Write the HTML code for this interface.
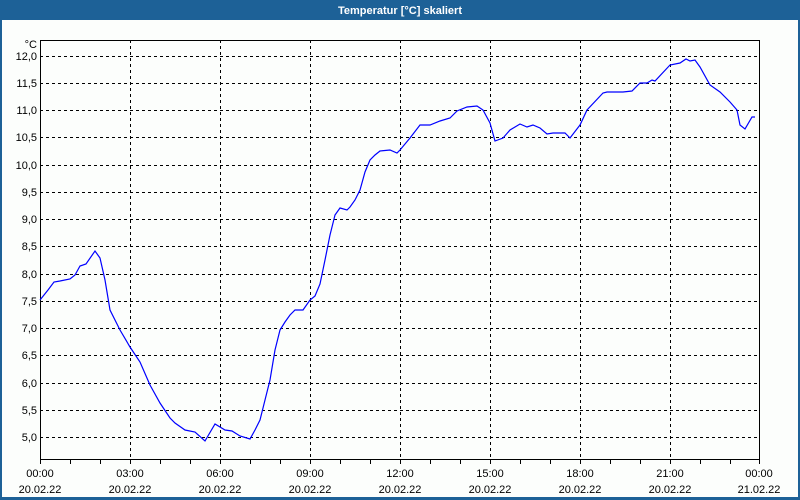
<!DOCTYPE html>
<html><head><meta charset="utf-8"><style>
html,body{margin:0;padding:0;width:800px;height:500px;overflow:hidden;background:#1d6197}
svg{display:block}
text{font-family:"Liberation Sans","DejaVu Sans",sans-serif;font-size:11px;fill:#000}
</style></head><body>
<svg width="800" height="500" xmlns="http://www.w3.org/2000/svg">
<rect x="0" y="0" width="800" height="500" fill="#1d6197"/>
<rect x="2" y="20" width="796" height="477" fill="#fcfefc"/>
<text x="400" y="14" text-anchor="middle" style="fill:#fff;font-weight:bold;font-size:11px">Temperatur [°C] skaliert</text>
<g stroke="#000" stroke-width="1" stroke-dasharray="3,3" shape-rendering="crispEdges">
<line x1="40" y1="56.5" x2="760" y2="56.5"/><line x1="40" y1="83.5" x2="760" y2="83.5"/><line x1="40" y1="110.5" x2="760" y2="110.5"/><line x1="40" y1="137.5" x2="760" y2="137.5"/><line x1="40" y1="165.5" x2="760" y2="165.5"/><line x1="40" y1="192.5" x2="760" y2="192.5"/><line x1="40" y1="219.5" x2="760" y2="219.5"/><line x1="40" y1="246.5" x2="760" y2="246.5"/><line x1="40" y1="274.5" x2="760" y2="274.5"/><line x1="40" y1="301.5" x2="760" y2="301.5"/><line x1="40" y1="328.5" x2="760" y2="328.5"/><line x1="40" y1="355.5" x2="760" y2="355.5"/><line x1="40" y1="383.5" x2="760" y2="383.5"/><line x1="40" y1="410.5" x2="760" y2="410.5"/><line x1="40" y1="437.5" x2="760" y2="437.5"/>
<line x1="130.5" y1="40" x2="130.5" y2="460"/><line x1="220.5" y1="40" x2="220.5" y2="460"/><line x1="310.5" y1="40" x2="310.5" y2="460"/><line x1="400.5" y1="40" x2="400.5" y2="460"/><line x1="490.5" y1="40" x2="490.5" y2="460"/><line x1="580.5" y1="40" x2="580.5" y2="460"/><line x1="670.5" y1="40" x2="670.5" y2="460"/>
</g>
<rect x="40.5" y="40.5" width="719" height="419" fill="none" stroke="#000" stroke-width="1" shape-rendering="crispEdges"/>
<g stroke="#000" shape-rendering="crispEdges">
<line x1="70.5" y1="460" x2="70.5" y2="464"/><line x1="100.5" y1="460" x2="100.5" y2="464"/><line x1="130.5" y1="460" x2="130.5" y2="464"/><line x1="160.5" y1="460" x2="160.5" y2="464"/><line x1="190.5" y1="460" x2="190.5" y2="464"/><line x1="220.5" y1="460" x2="220.5" y2="464"/><line x1="250.5" y1="460" x2="250.5" y2="464"/><line x1="280.5" y1="460" x2="280.5" y2="464"/><line x1="310.5" y1="460" x2="310.5" y2="464"/><line x1="340.5" y1="460" x2="340.5" y2="464"/><line x1="370.5" y1="460" x2="370.5" y2="464"/><line x1="400.5" y1="460" x2="400.5" y2="464"/><line x1="430.5" y1="460" x2="430.5" y2="464"/><line x1="460.5" y1="460" x2="460.5" y2="464"/><line x1="490.5" y1="460" x2="490.5" y2="464"/><line x1="520.5" y1="460" x2="520.5" y2="464"/><line x1="550.5" y1="460" x2="550.5" y2="464"/><line x1="580.5" y1="460" x2="580.5" y2="464"/><line x1="610.5" y1="460" x2="610.5" y2="464"/><line x1="640.5" y1="460" x2="640.5" y2="464"/><line x1="670.5" y1="460" x2="670.5" y2="464"/><line x1="700.5" y1="460" x2="700.5" y2="464"/><line x1="730.5" y1="460" x2="730.5" y2="464"/><line x1="40.5" y1="460" x2="40.5" y2="464"/><line x1="759.5" y1="460" x2="759.5" y2="464"/>
</g>
<g text-anchor="end">
<text x="37" y="48">°C</text>
<text x="37" y="60">12,0</text><text x="37" y="87">11,5</text><text x="37" y="114">11,0</text><text x="37" y="141">10,5</text><text x="37" y="169">10,0</text><text x="37" y="196">9,5</text><text x="37" y="223">9,0</text><text x="37" y="250">8,5</text><text x="37" y="278">8,0</text><text x="37" y="305">7,5</text><text x="37" y="332">7,0</text><text x="37" y="359">6,5</text><text x="37" y="387">6,0</text><text x="37" y="414">5,5</text><text x="37" y="441">5,0</text>
</g>
<g text-anchor="middle">
<text x="40" y="477">00:00</text><text x="40" y="493">20.02.22</text>
<text x="130" y="477">03:00</text><text x="130" y="493">20.02.22</text>
<text x="220" y="477">06:00</text><text x="220" y="493">20.02.22</text>
<text x="310" y="477">09:00</text><text x="310" y="493">20.02.22</text>
<text x="400" y="477">12:00</text><text x="400" y="493">20.02.22</text>
<text x="490" y="477">15:00</text><text x="490" y="493">20.02.22</text>
<text x="580" y="477">18:00</text><text x="580" y="493">20.02.22</text>
<text x="670" y="477">21:00</text><text x="670" y="493">20.02.22</text>
<text x="759" y="477">00:00</text><text x="759" y="493">21.02.22</text>
</g>
<polyline fill="none" stroke="#0000ff" stroke-width="1.2" points="40,300 48,290 54,282 60,281 70,279 75,275 80,266 86,264 95,251 100,258 105,280 110,310 120,330 130,347 140,362 150,385 160,403 170,418 175,423 185,430 195,432 205,441 215,424 225,430 232,431 240,436 250,439 255,430 260,420 265,400 270,380 275,350 280,330 285,322 290,315 295,310 303,310 310,300 315,296 320,284 325,260 330,235 335,215 340,208 347,210 350,207 355,200 360,190 365,172 370,160 375,155 380,151 390,150 397,153 400,150 410,138 420,125 430,125 440,121 450,118 457,111 467,107 477,106 483,110 490,123 495,141 503,138 510,130 520,124 527,127 533,125 540,128 547,134 553,133 565,133 570,138 580,125 587,110 603,93 607,92 623,92 632,91 640,83 647,83 652,80 655,81 670,65 680,63 686,59 690,61 695,60 700,67 710,85 720,92 730,102 737,110 740,125 745,129 752,117 755,117"/>
</svg>
</body></html>
